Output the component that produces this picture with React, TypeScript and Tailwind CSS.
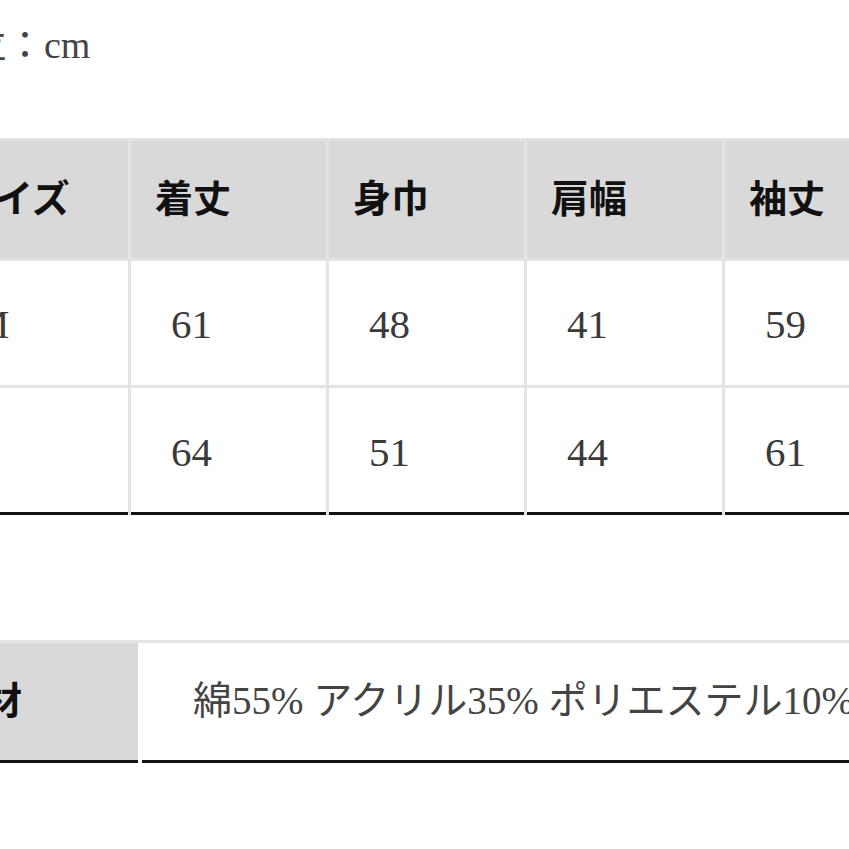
const headers = ['サイズ', '着丈', '身巾', '肩幅', '袖丈'];

const rows = [
  ['M', '61', '48', '41', '59'],
  ['L', '64', '51', '44', '61'],
];

const serif = "font-['Liberation_Serif','Noto_Sans_CJK_JP',serif]";

const App = () => {
  return (
    <div className={`h-[849px] w-[849px] overflow-hidden bg-white ${serif}`}>
      <p className="-ml-[70px] mt-[23px] whitespace-nowrap text-[38px] leading-[44px] text-[#444]">
        単位：cm
      </p>

      {/* サイズ表 */}
      <div className="-ml-[67px] mt-[71px] grid w-max grid-cols-[195px_195px_195px_195px_195px] gap-[3px] bg-[#e3e3e3] pt-[3px]">
        {headers.map((h) => (
          <div
            key={h}
            className="flex h-[117px] items-center whitespace-nowrap bg-[#dad9da] pl-[24px] text-[38px] font-bold text-[#111]"
          >
            {h}
          </div>
        ))}
        {rows.map((row, ri) =>
          row.map((v, ci) => (
            <div
              key={`${ri}-${ci}`}
              className={
                ri === rows.length - 1
                  ? 'flex h-[127px] items-center border-b-[3px] border-[#111] bg-white pl-[40px] pt-[6px] text-[41px] text-[#3a3a3a]'
                  : 'flex h-[124px] items-center bg-white pl-[40px] pt-[4px] text-[41px] text-[#3a3a3a]'
              }
            >
              {v}
            </div>
          )),
        )}
      </div>

      {/* 素材 */}
      <div className="-ml-[76px] mt-[125px] flex w-max gap-[4px] border-t-[3px] border-[#e3e3e3]">
        <div className="flex h-[120px] w-[214px] items-center whitespace-nowrap border-b-[3px] border-[#111] bg-[#dad9da] pl-[22px] text-[38px] font-bold text-[#111]">
          素材
        </div>
        <div className="flex h-[120px] w-[900px] items-center whitespace-nowrap border-b-[3px] border-[#111] bg-white pl-[51px] text-[39px] text-[#444]">
          綿55% アクリル35% ポリエステル10%
        </div>
      </div>
    </div>
  );
};

export default App;
